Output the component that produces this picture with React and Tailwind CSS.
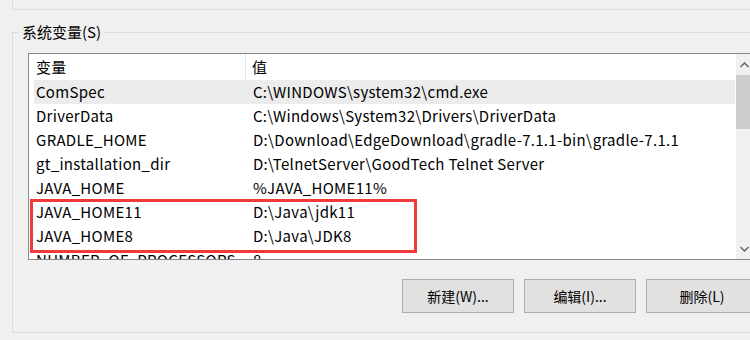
import React from "react";

const rows = [
  { name: "ComSpec", value: "C:\\WINDOWS\\system32\\cmd.exe", selected: true },
  { name: "DriverData", value: "C:\\Windows\\System32\\Drivers\\DriverData" },
  { name: "GRADLE_HOME", value: "D:\\Download\\EdgeDownload\\gradle-7.1.1-bin\\gradle-7.1.1" },
  { name: "gt_installation_dir", value: "D:\\TelnetServer\\GoodTech Telnet Server" },
  { name: "JAVA_HOME", value: "%JAVA_HOME11%" },
  { name: "JAVA_HOME11", value: "D:\\Java\\jdk11" },
  { name: "JAVA_HOME8", value: "D:\\Java\\JDK8" },
  { name: "NUMBER_OF_PROCESSORS", value: "8" },
];

const font = { fontFamily: '"Noto Sans CJK SC", "Noto Sans", sans-serif' };

const Row = ({ row }) => (
  <div className={`flex h-[24px] shrink-0 items-center ${row.selected ? "bg-[#ececec]" : ""}`}>
    <div className="w-[212px] shrink-0 pl-[2px] whitespace-nowrap">{row.name}</div>
    <div className="pl-[7px] whitespace-nowrap">{row.value}</div>
  </div>
);

const Button = ({ children }) => (
  <button className="h-[34px] w-[112px] shrink-0 border border-[#adadad] bg-[#e1e1e1] text-[14px] text-[#000]">
    {children}
  </button>
);

const App = () => {
  return (
    <div className="h-[340px] w-[750px] overflow-hidden bg-[#f0f0f0] text-[15px] text-[#000]" style={font}>
      {/* upper group box edge */}
      <div className="ml-[12px] h-[10px] border-b border-l border-[#dcdcdc]" />

      <div className="relative ml-[12px] mt-[22px] w-[760px] border border-[#dcdcdc] pl-[15px] pt-[20px] pb-[19px]">
        <span className="absolute left-[6px] top-[-13px] bg-[#f0f0f0] px-[3px] leading-[24px]">
          系统变量(S)
        </span>

        {/* list view */}
        <div className="relative flex h-[207px] w-[726px] border border-[#828790] bg-white tracking-[0.3px]">
          <div className="flex w-[706px] flex-col overflow-hidden pl-[5px]">
            <div className="flex h-[26px] shrink-0 items-center">
              <div className="w-[212px] shrink-0 border-r border-[#e5e5e5] pl-[2px] leading-[26px]">变量</div>
              <div className="pl-[6px]">值</div>
            </div>
            {rows.map((row) => (
              <Row key={row.name} row={row} />
            ))}
          </div>

          {/* scrollbar */}
          <div className="ml-[1px] flex w-[17px] flex-col bg-[#f0f0f0]">
            <div className="flex h-[21px] items-center justify-center">
              <svg width="9" height="6" viewBox="0 0 9 6">
                <path d="M0.5 5 L4.5 1 L8.5 5" fill="none" stroke="#606060" strokeWidth="1.4" />
              </svg>
            </div>
            <div className="h-[54px] bg-[#cdcdcd]" />
            <div className="flex-1" />
            <div className="flex h-[21px] items-center justify-center">
              <svg width="9" height="6" viewBox="0 0 9 6">
                <path d="M0.5 1 L4.5 5 L8.5 1" fill="none" stroke="#606060" strokeWidth="1.4" />
              </svg>
            </div>
          </div>

          {/* highlight box */}
          <div className="absolute left-[1px] top-[145px] h-[54px] w-[387px] border-[3px] border-[#f03a3a]" />
        </div>

        <div className="mt-[19px] flex gap-[10px] pl-[374px]">
          <Button>新建(W)...</Button>
          <Button>编辑(I)...</Button>
          <Button>删除(L)</Button>
        </div>
      </div>
    </div>
  );
};

export default App;
